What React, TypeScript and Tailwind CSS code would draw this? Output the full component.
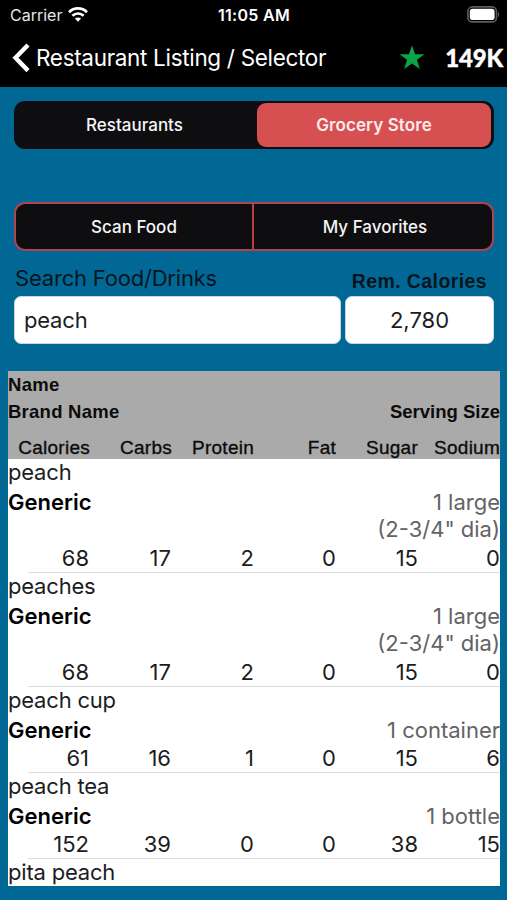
import { clsx } from "clsx";

type Food = {
  name: string;
  brand?: string;
  serving?: string[];
  values?: number[];
};

const COLUMNS = ["Calories", "Carbs", "Protein", "Fat", "Sugar", "Sodium"];

const FOODS: Food[] = [
  { name: "peach", brand: "Generic", serving: ["1 large", '(2-3/4" dia)'], values: [68, 17, 2, 0, 15, 0] },
  { name: "peaches", brand: "Generic", serving: ["1 large", '(2-3/4" dia)'], values: [68, 17, 2, 0, 15, 0] },
  { name: "peach cup", brand: "Generic", serving: ["1 container"], values: [61, 16, 1, 0, 15, 6] },
  { name: "peach tea", brand: "Generic", serving: ["1 bottle"], values: [152, 39, 0, 0, 38, 15] },
  { name: "pita peach" },
];

function StatusBar() {
  return (
    <div className="grid h-[30px] grid-cols-[1fr_auto_1fr] items-center pr-[7px] pl-[10px] text-white">
      <div className="flex items-center gap-[6px]">
        <span className="text-[16px] text-neutral-200">Carrier</span>
        <svg className="-mt-[2px]" width="20" height="15" viewBox="0 0 20 15" fill="none" stroke="white" strokeWidth="2.7">
          <path d="M1 5.2C6 .2 14 .2 19 5.2" />
          <path d="M4.4 8.8C7.5 5.7 12.5 5.7 15.6 8.8" />
          <path d="M10 14.8L6.9 11.6C8.6 10 11.4 10 13.1 11.6Z" fill="white" stroke="none" />
        </svg>
      </div>
      <span className="-ml-[2px] text-[16px] font-semibold tracking-[0.3px]">11:05 AM</span>
      <svg className="-mt-px justify-self-end" width="33" height="17" viewBox="0 0 33 17">
        <rect x="0.9" y="0.9" width="28.6" height="15" rx="4.5" fill="none" stroke="#5c5c5e" strokeWidth="1.6" />
        <rect x="2.8" y="2.8" width="24.8" height="11.2" rx="2.8" fill="white" />
        <path d="M31 6v5c1.6-.6 1.6-4.400 0-5z" fill="#5c5c5e" />
      </svg>
    </div>
  );
}

function NavBar() {
  return (
    <div className="flex h-[57px] items-center pr-1 pb-[2px] pl-3 text-white">
      <svg width="19" height="30" viewBox="0 0 19 30" fill="none" stroke="white" strokeWidth="4.4">
        <path d="M16 2L3.500 14.800L16 27.600" />
      </svg>
      <h1 className="ml-[5px] text-[22.5px] tracking-[-0.32px] whitespace-nowrap">Restaurant Listing / Selector</h1>
      <svg className="ml-auto" width="26" height="25" viewBox="0 0 26 25" fill="#0ba547">
        <path d="M13 0.500L16.100 9.200H25.500L18 14.700L20.800 24L13 18.400L5.200 24L8 14.700L0.500 9.200H9.900Z" />
      </svg>
      <span className="ml-[20px] font-[Lato] text-[24px] font-black tracking-[-0.2px] [-webkit-text-stroke:0.4px_white]">
        149K
      </span>
    </div>
  );
}

function Segment({ label, active }: { label: string; active?: boolean }) {
  return (
    <button
      className={clsx(
        "flex items-center justify-center rounded-[9px] text-[17px]",
        active ? "bg-[#d65052] pt-[2px] font-semibold tracking-[0.1px] text-[#fdeaea]" : "pt-px pr-1 font-medium text-neutral-100",
      )}
    >
      {label}
    </button>
  );
}

function FoodRow({ food }: { food: Food }) {
  const tall = (food.serving?.length ?? 0) > 1;

  return (
    <li className="text-[22px] text-[#1c1c1e]">
      <p className="h-[29px] leading-[27px] tracking-[-0.2px]">{food.name}</p>
      {food.values ? (
        <>
          <div className={clsx("flex justify-between", tall ? "h-[57px]" : "h-[29px]")}>
            <p className="leading-[28px] font-semibold text-black">{food.brand}</p>
            <p className="pt-px text-right leading-[27px] text-[#636366]">
              {food.serving?.map((line) => (
                <span key={line} className="block">
                  {line}
                </span>
              ))}
            </p>
          </div>
          <div className="grid h-[27px] grid-cols-6 text-right leading-[27px]">
            {food.values.map((v, i) => (
              <span key={COLUMNS[i]} className={clsx(i < 2 && "pr-px")}>
                {v}
              </span>
            ))}
          </div>
          <div className="ml-5 h-px bg-[#dcdcdd]" />
        </>
      ) : null}
    </li>
  );
}

export default function App() {
  return (
    <div className="flex h-[900px] w-[507px] flex-col overflow-hidden bg-[#016896] font-[Inter,sans-serif]">
      <header className="bg-black">
        <StatusBar />
        <NavBar />
      </header>

      <div className="pt-[14px] pr-[13px] pl-[14px]">
        <div className="grid h-12 grid-cols-[241px_234px] rounded-[11px] bg-[#0e0e10] py-[2px] pl-[2px]">
          <Segment label="Restaurants" />
          <Segment label="Grocery Store" active />
        </div>

        <div className="mt-[53px] grid h-[49px] grid-cols-[236px_1fr] rounded-[11px] border-2 border-[#b04350] bg-[#0e0e10] text-[17px] font-medium text-neutral-100">
          <button className="pt-[2px]">Scan Food</button>
          <button className="border-l-2 border-[#bf3b45] pt-[2px] pl-1">My Favorites</button>
        </div>

        <div className="mt-[12px] grid grid-cols-[327px_149px] gap-x-1">
          <label htmlFor="search" className="h-[33px] pl-px text-[22px] leading-[30px] tracking-[-0.2px] text-[#04151d]">
            Search Food/Drinks
          </label>
          <span className="h-[33px] pr-[7px] text-right font-['Liberation_Sans'] text-[19.5px] leading-[36px] font-bold tracking-[0.4px] text-[#04151d]">
            Rem. Calories
          </span>
          <input
            id="search"
            defaultValue="peach"
            className="h-12 w-full rounded-[7px] border border-[#c9d6dc] bg-white px-[9px] text-[22px] tracking-[-0.2px] text-[#1c1c1e]"
          />
          <div className="flex h-12 items-center justify-center rounded-[7px] border border-[#c9d6dc] bg-white text-[22px] text-[#1c1c1e]">
            2,780
          </div>
        </div>
      </div>

      <main className="mt-[27px] mr-[7px] ml-2 h-[515px] overflow-hidden bg-white">
        <div className="h-[88px] bg-[#aaaaaa] font-['Liberation_Sans'] text-[#0c0c0c]">
          <p className="h-[27px] text-[18.5px] leading-[28px] font-bold tracking-[0.3px]">Name</p>
          <div className="flex h-[27px] justify-between text-[18.5px] leading-[28px] font-bold">
            <span className="tracking-[0.25px]">Brand Name</span>
            <span>Serving Size</span>
          </div>
          <div className="grid h-[34px] grid-cols-6 text-right text-[19px] leading-[45px] tracking-[0.25px] [-webkit-text-stroke:0.35px_#0c0c0c]">
            {COLUMNS.map((c) => (
              <span key={c}>{c}</span>
            ))}
          </div>
        </div>
        <ul>
          {FOODS.map((food) => (
            <FoodRow key={food.name} food={food} />
          ))}
        </ul>
      </main>
    </div>
  );
}
